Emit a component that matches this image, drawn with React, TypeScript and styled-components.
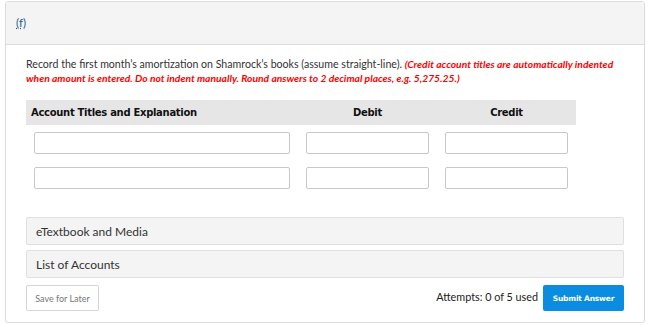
import React from 'react';
import styled, { createGlobalStyle } from 'styled-components';

const GlobalStyle = createGlobalStyle`
  html, body {
    margin: 0;
    padding: 0;
    background: #fff;
    font-family: Lato, "Open Sans", sans-serif;
  }
`;

const Page = styled.div`
  padding: 1px 5px 0 5px;
  width: 650px;
  box-sizing: border-box;
`;

const Card = styled.div`
  border: 1px solid #dcdcdc;
  border-radius: 3px;
  width: 640px;
  box-sizing: border-box;
  box-shadow: 0 1px 2px rgba(0, 0, 0, 0.06);
`;

const CardHeader = styled.div`
  height: 42px;
  background: #f4f4f4;
  border-bottom: 1px solid #dcdcdc;
  display: flex;
  align-items: center;
  padding-left: 10px;
`;

const PartLabel = styled.span`
  font-size: 11.5px;
  color: #1b5a8a;
  text-decoration: underline;
  text-decoration-style: dotted;
  margin-top: -2px;
`;

const Body = styled.div`
  padding: 12px 20px 11px 20px;
`;

const Instructions = styled.p`
  margin: 0;
  font-size: 10.6px;
  line-height: 14px;
  color: #333;
  width: 594px;
`;

const Warning = styled.em`
  color: #ff0000;
  font-weight: bold;
  font-size: 10.3px;
`;

const Table = styled.div`
  margin-top: 15px;
  width: 550px;
`;

const Row = styled.div<{ head?: boolean }>`
  display: grid;
  grid-template-columns: 272px 139px 139px;
  align-items: center;
  height: ${p => (p.head ? '25px' : '35px')};
  background: ${p => (p.head ? '#e6e6e6' : 'transparent')};
`;

const HeadCell = styled.div<{ center?: boolean }>`
  font-family: "DejaVu Sans", Verdana, sans-serif;
  font-weight: bold;
  font-size: 10px;
  letter-spacing: -0.3px;
  color: #111;
  padding-left: ${p => (p.center ? '0' : '5px')};
  text-align: ${p => (p.center ? 'center' : 'left')};
`;

const Cell = styled.div`
  padding: 0 8px;
  display: flex;
`;

const Input = styled.input`
  width: 100%;
  height: 22px;
  box-sizing: border-box;
  border: 1px solid #c8c8c8;
  border-radius: 2px;
  background: #fff;
  outline: none;
`;

const Bars = styled.div`
  margin-top: 22px;
  display: flex;
  flex-direction: column;
  gap: 5px;
`;

const Bar = styled.div`
  height: 28px;
  box-sizing: border-box;
  background: #f4f4f4;
  border: 1px solid #e0e0e0;
  border-radius: 2px;
  display: flex;
  align-items: center;
  padding-left: 9px;
  font-size: 12px;
  color: #333;
  width: 598px;
`;

const Footer = styled.div`
  margin-top: 7px;
  display: flex;
  align-items: center;
  width: 598px;
`;

const SaveButton = styled.button`
  height: 26px;
  width: 73px;
  box-sizing: border-box;
  background: #fff;
  border: 1px solid #d6d6d6;
  border-radius: 2px;
  font-family: Lato, sans-serif;
  font-size: 9px;
  color: #777;
  padding: 0;
`;

const Attempts = styled.span`
  margin-left: auto;
  margin-right: 5px;
  font-size: 10.8px;
  color: #222;
  margin-top: -4px;
`;

const SubmitButton = styled.button`
  height: 26px;
  width: 81px;
  box-sizing: border-box;
  background: #0a8de0;
  border: none;
  border-radius: 2px;
  color: #fff;
  font-family: "DejaVu Sans", Verdana, sans-serif;
  font-weight: bold;
  font-size: 7.5px;
  letter-spacing: -0.2px;
  padding: 0;
`;

export default function App() {
  return (
    <>
      <GlobalStyle />
      <Page>
        <Card>
          <CardHeader>
            <PartLabel>(f)</PartLabel>
          </CardHeader>
          <Body>
            <Instructions>
              Record the first month’s amortization on Shamrock’s books (assume straight-line).{' '}
              <Warning>
                (Credit account titles are automatically indented when amount is entered. Do not indent
                manually. Round answers to 2 decimal places, e.g. 5,275.25.)
              </Warning>
            </Instructions>
            <Table>
              <Row head>
                <HeadCell>Account Titles and Explanation</HeadCell>
                <HeadCell center>Debit</HeadCell>
                <HeadCell center>Credit</HeadCell>
              </Row>
              {[0, 1].map(i => (
                <Row key={i}>
                  <Cell><Input /></Cell>
                  <Cell><Input /></Cell>
                  <Cell><Input /></Cell>
                </Row>
              ))}
            </Table>
            <Bars>
              <Bar>eTextbook and Media</Bar>
              <Bar>List of Accounts</Bar>
            </Bars>
            <Footer>
              <SaveButton>Save for Later</SaveButton>
              <Attempts>Attempts: 0 of 5 used</Attempts>
              <SubmitButton>Submit Answer</SubmitButton>
            </Footer>
          </Body>
        </Card>
      </Page>
    </>
  );
}
